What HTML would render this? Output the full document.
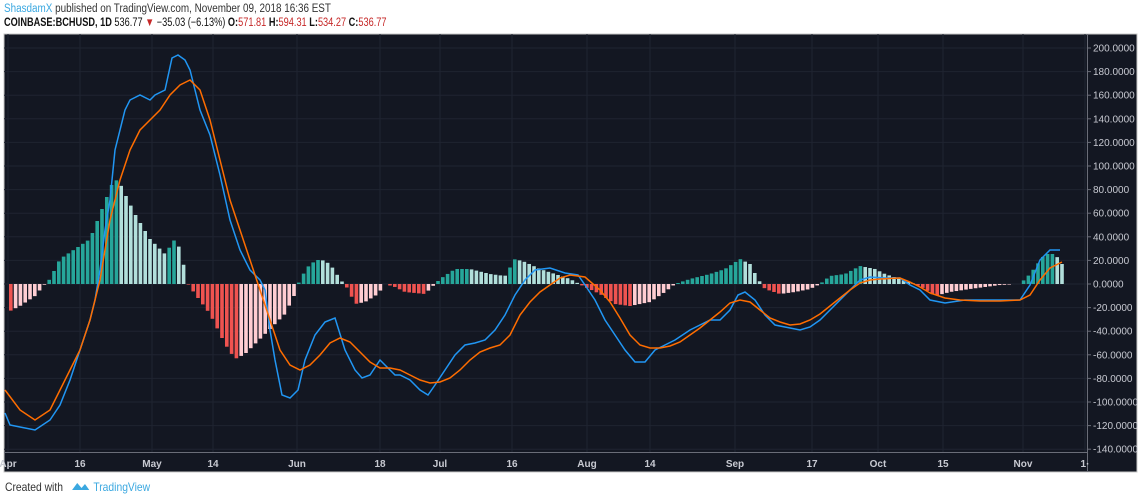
<!DOCTYPE html>
<html><head><meta charset="utf-8"><style>
body{margin:0;width:1140px;height:501px;background:#fff;overflow:hidden;font-family:"Liberation Sans",sans-serif}
.h1{position:absolute;left:4px;top:3px;font-size:11.5px;color:#333;transform:scaleX(0.86);transform-origin:0 0;white-space:nowrap}
.h2{position:absolute;left:4px;top:17px;font-size:11.5px;color:#111;transform:scaleX(0.8);transform-origin:0 0;white-space:nowrap}
.r{color:#c62828}
#c{position:absolute;left:0;top:0}
.foot{position:absolute;left:5px;top:480px;font-size:12px;color:#333;transform:scaleX(0.86);transform-origin:0 0;white-space:nowrap}
</style></head><body>
<div class="h1"><span style="color:#3ba8e0">ShasdamX</span> published on TradingView.com, November 09, 2018 16:36 EST</div>
<div class="h2"><b>COINBASE:BCHUSD, 1D</b> 536.77 <span class="r">▼</span> −35.03 (−6.13%) <b>O:</b><span class="r">571.81</span> <b>H:</b><span class="r">594.31</span> <b>L:</b><span class="r">534.27</span> <b>C:</b><span class="r">536.77</span></div>
<svg id="c" width="1140" height="501" xmlns="http://www.w3.org/2000/svg">
<rect x="4" y="34" width="1133" height="438" fill="#131722" stroke="#c8c8c8" stroke-width="1"/>
<g id="grid" stroke="#1f2431" stroke-width="1"></g>
<line x1="4" y1="452.5" x2="1087" y2="452.5" stroke="#6a6d78"/>
<line x1="1087.5" y1="34" x2="1087.5" y2="472" stroke="#6a6d78"/>
<g id="bars"></g>
<polyline id="blue" fill="none" stroke="#2196f3" stroke-width="1.5"/>
<polyline id="orng" fill="none" stroke="#ff6d00" stroke-width="1.5"/>
<g id="lab" font-family="Liberation Sans,sans-serif" font-size="10" fill="#c8cad2"></g>
</svg>
<div class="foot">Created with <svg width="22" height="12" viewBox="0 0 22 12" style="vertical-align:-1px;margin:0 4px 0 6px"><path d="M1 10 L7 3 L12 8 L16 4 L21 10 Z" fill="#3ba8e0"/></svg><span style="color:#3ba8e0">TradingView</span></div>
<script>
const NS="http://www.w3.org/2000/svg";
function el(t,a,p,txt){const e=document.createElementNS(NS,t);for(const k in a)e.setAttribute(k,a[k]);if(txt!=null)e.textContent=txt;p.appendChild(e);return e;}
const grid=document.getElementById('grid'),lab=document.getElementById('lab'),bars=document.getElementById('bars');
for(let v=200;v>=-140;v-=20){const y=284-v*1.18;el('line',{x1:4,y1:y,x2:1087,y2:y},grid);el('line',{x1:1087,y1:y,x2:1091,y2:y,stroke:'#6a6d78'},lab);el('text',{x:1093,y:y+3.5},lab,(v<0?'-':'')+Math.abs(v).toFixed(4));}
const xs=[[8,'Apr'],[80,'16'],[152,'May'],[213,'14'],[297,'Jun'],[380,'18'],[440,'Jul'],[512,'16'],[587,'Aug'],[650,'14'],[735,'Sep'],[812,'17'],[878,'Oct'],[943,'15'],[1023,'Nov'],[1085,'1·']];
xs.forEach(([x,t])=>{el('line',{x1:x,y1:34,x2:x,y2:452},grid);el('text',{x:x,y:467,'text-anchor':'middle','font-weight':'bold'},lab,t);});
const K=[[8,-28],[20,-22],[35,-12],[45,0],[50,5],[60,25],[75,35],[90,45],[100,70],[112,100],[118,105],[125,90],[135,70],[150,45],[165,30],[175,45],[180,35],[188,0],[195,-10],[210,-30],[225,-60],[235,-75],[245,-70],[255,-60],[270,-45],[285,-30],[295,-10],[300,5],[310,20],[320,25],[330,20],[340,5],[348,-5],[355,-20],[365,-18],[378,-10],[385,0],[395,-3],[405,-8],[425,-10],[432,-3],[440,5],[455,15],[470,15],[490,10],[505,8],[515,25],[525,22],[540,15],[555,10],[570,5],[585,-3],[600,-10],[615,-20],[630,-22],[650,-18],[665,-8],[675,0],[690,5],[710,10],[725,15],[740,25],[750,20],[758,5],[765,-5],[780,-10],[795,-8],[810,-5],[820,0],[830,8],[845,10],[860,18],[875,15],[885,10],[900,5],[915,0],[925,-5],[935,-12],[950,-8],[970,-5],[985,-3],[1000,-1],[1020,0],[1030,10],[1045,30],[1055,30],[1062,20]];
function interp(x){for(let i=0;i<K.length-1;i++){if(x>=K[i][0]&&x<=K[i+1][0]){const t=(x-K[i][0])/(K[i+1][0]-K[i][0]);return K[i][1]+t*(K[i+1][1]-K[i][1]);}}return 0;}
let prev=null;
for(let x=6;x<=1062;x+=4.8){const h=interp(x);if(prev===null)prev=h;let c;
if(h>=0)c=h>=prev?'#26a69a':'#b2dfdb';else c=h<=prev?'#ef5350':'#ffcdd2';
prev=h;if(Math.abs(h)<0.5){continue;}
el('rect',{x:x-1.8,y:h>0?284-h:284,width:3.6,height:Math.abs(h),fill:c},bars);}
const B="5,413 10,425 20,427 35,430 50,420 60,405 70,380 80,350 90,320 95,300 100,270 105,230 110,200 115,150 120,130 125,110 130,100 140,95 150,100 155,95 165,90 172,58 178,55 185,60 190,70 195,90 200,110 210,135 220,175 230,220 240,250 250,270 260,280 265,290 270,330 275,360 282,395 290,398 298,390 305,360 315,335 325,322 335,318 345,350 355,370 362,378 370,375 380,360 388,368 395,375 400,375 410,380 420,390 428,395 435,385 445,370 455,355 465,345 475,343 485,340 495,330 505,315 515,295 525,280 535,270 550,268 565,273 578,275 585,285 595,300 605,320 615,335 625,350 635,362 645,362 655,350 665,345 675,340 690,330 700,325 710,320 720,320 730,310 738,295 745,292 755,300 765,315 775,325 785,327 800,330 810,327 820,320 830,310 840,300 850,290 860,280 870,277 885,278 900,278 910,285 920,290 930,300 945,303 965,300 985,300 1005,300 1020,300 1030,285 1040,260 1050,250 1060,250";
const O="5,390 20,410 35,420 50,410 60,390 70,370 80,350 90,320 100,280 110,220 120,180 130,150 140,130 150,120 160,110 170,95 180,85 190,80 200,90 210,120 220,160 230,200 240,230 250,260 260,290 270,320 280,350 290,365 300,370 310,365 320,355 330,343 340,338 350,342 360,352 370,362 380,368 390,368 400,370 410,375 420,380 430,383 440,382 450,378 460,370 470,360 480,352 490,348 500,345 510,335 520,315 530,302 540,292 550,285 560,278 570,275 585,277 600,290 610,302 620,318 630,335 640,345 650,348 660,348 670,346 680,342 690,335 700,328 710,320 720,312 730,303 740,300 750,302 760,310 770,318 780,322 790,325 800,324 810,320 820,314 830,306 840,298 850,290 860,283 870,280 880,279 900,278 910,282 920,287 930,293 945,298 960,300 980,301 1000,301 1020,300 1030,295 1040,280 1050,268 1062,262";
document.getElementById('blue').setAttribute('points',B);
document.getElementById('orng').setAttribute('points',O);
</script>
</body></html>
